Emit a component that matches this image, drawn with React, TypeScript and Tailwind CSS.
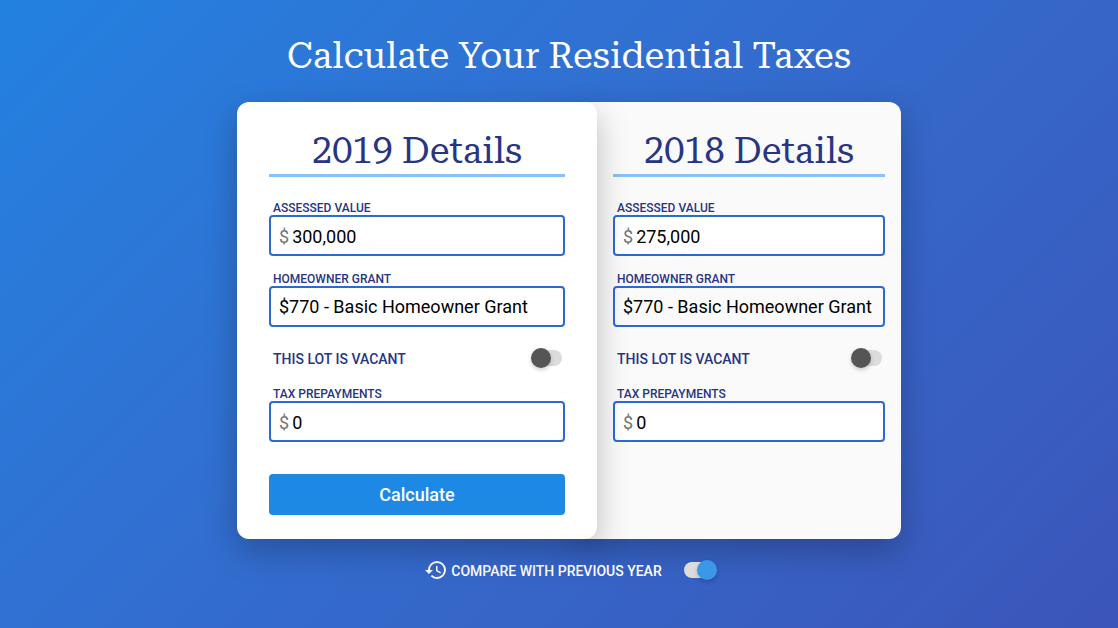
import { useState } from "react";
import { MdHistory } from "react-icons/md";

function Toggle({ id, on, onChange }: { id: string; on: boolean; onChange: () => void }) {
  return (
    <input
      id={id}
      type="checkbox"
      role="switch"
      checked={on}
      onChange={onChange}
      className="relative h-4 w-[30px] shrink-0 cursor-pointer appearance-none rounded-full bg-[#dcdcdc] before:absolute before:-top-0.5 before:-left-px before:size-5 before:rounded-full before:bg-[#555555] before:shadow-[0_2px_4px_rgba(0,0,0,0.2)] checked:before:left-[13px] checked:before:bg-[#3b98e8]"
    />
  );
}

function MoneyField({ id, label, initial }: { id: string; label: string; initial: string }) {
  const [value, setValue] = useState(initial);
  return (
    <div>
      <label htmlFor={id} className="block px-1 text-xs leading-3.5 font-medium text-[#283583] uppercase">
        {label}
      </label>
      <div className="flex h-[41px] items-center rounded border-2 border-[#2b6bcf] bg-white px-2 pt-0.5 text-lg">
        <span className="mr-[3px] text-[#757575]">$</span>
        <input
          id={id}
          inputMode="numeric"
          value={value}
          onChange={(e) => setValue(e.target.value)}
          className="w-full min-w-0 bg-transparent text-black outline-none"
        />
      </div>
    </div>
  );
}

function Details({ year, assessed }: { year: number; assessed: string }) {
  const [vacant, setVacant] = useState(false);
  return (
    <div>
      <h2 className="border-b-[3px] border-[#89c2f7] pt-0.5 text-center font-['Roboto_Slab','Roboto_Serif',serif] text-4xl leading-[46px] text-[#283583] lining-nums">
        {year} Details
      </h2>
      <div className="mt-6">
        <MoneyField id={`assessed-${year}`} label="Assessed Value" initial={assessed} />
      </div>
      <div className="mt-4">
        <label htmlFor={`grant-${year}`} className="block px-1 text-xs leading-3.5 font-medium text-[#283583] uppercase">
          Homeowner Grant
        </label>
        <select
          id={`grant-${year}`}
          className="block h-[41px] w-full cursor-pointer appearance-none rounded border-2 border-[#2b6bcf] bg-transparent px-2 text-lg text-black"
        >
          <option>$770 - Basic Homeowner Grant</option>
        </select>
      </div>
      <div className="mt-[19px] flex h-6 items-center justify-between pr-[3px] pl-1">
        <label htmlFor={`vacant-${year}`} className="pt-0.5 text-sm font-medium text-[#283583] uppercase">
          This lot is vacant
        </label>
        <Toggle id={`vacant-${year}`} on={vacant} onChange={() => setVacant(!vacant)} />
      </div>
      <div className="mt-[17px]">
        <MoneyField id={`prepayments-${year}`} label="Tax Prepayments" initial="0" />
      </div>
    </div>
  );
}

export default function App() {
  const [compare, setCompare] = useState(true);
  return (
    <main className="flex min-h-screen flex-col items-center bg-linear-135 from-[#2281e0] to-[#3b55ba] pt-8 pr-4 pb-8 pl-9 font-[Roboto,sans-serif]">
      <h1 className="text-center font-['Roboto_Slab','Roboto_Serif',serif] text-4xl leading-12 text-white">
        Calculate Your Residential Taxes
      </h1>
      <form
        onSubmit={(e) => e.preventDefault()}
        className="mt-[22px] flex w-full justify-center"
      >
        <section className="relative z-10 w-full max-w-[360px] rounded-xl bg-white px-8 py-6 shadow-[0_12px_32px_rgba(0,0,0,0.25)]">
          <Details year={2019} assessed="300,000" />
          <button
            type="submit"
            className="mt-8 block h-[41px] w-full cursor-pointer rounded bg-[#1e88e5] text-lg font-medium text-white"
          >
            Calculate
          </button>
        </section>
        {compare && (
          <section className="-ml-5 w-full max-w-[324px] rounded-xl bg-[#fafafa] py-6 pr-4 pl-9 shadow-[0_12px_32px_rgba(0,0,0,0.25)]">
            <Details year={2018} assessed="275,000" />
          </section>
        )}
      </form>
      <div className="mt-[19px] flex h-6 items-center text-white">
        <MdHistory className="size-6" />
        <label htmlFor="compare" className="mr-[22px] ml-[3px] pt-0.5 text-sm font-medium uppercase">
          Compare with previous year
        </label>
        <Toggle id="compare" on={compare} onChange={() => setCompare(!compare)} />
      </div>
    </main>
  );
}
